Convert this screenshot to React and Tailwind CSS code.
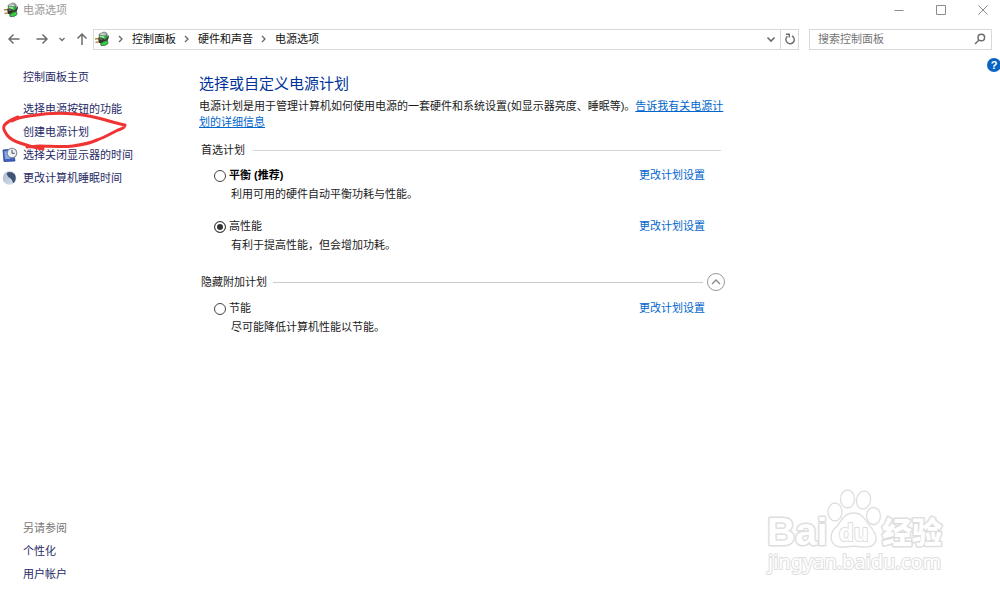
import React, { useState } from "react";

function PowerIcon() {
  return (
    <svg className="size-4 shrink-0" viewBox="0 0 16 16" aria-hidden="true">
      <path d="M8 3 Q8 1 10 1 Q13 1 13.5 4" fill="none" stroke="#8a9a94" strokeWidth="1" />
      <path d="M5 3.5 L12.5 3 L14 12.5 Q11 15.8 7 14.5 Z" fill="#2fae3f" stroke="#3c5a45" strokeWidth="0.7" />
      <path d="M5.8 4.8 L10 4.4 L10.5 7 L6.2 7 Z" fill="#8fe98c" />
      <path d="M8 12.5 L13 10.5 L13.2 12.6 Q11.5 14.4 8.2 14 Z" fill="#35d441" />
      <ellipse cx="9" cy="3.2" rx="3.6" ry="1.3" fill="#d5ddd8" stroke="#56665c" strokeWidth="0.6" />
      <path d="M10 9.500 Q14.500 9 14.200 4.500" fill="none" stroke="#333" strokeWidth="1.4" />
      <path d="M1 8 L4.5 7.500 M1.500 11.500 L5 10.800" stroke="#b18a2e" strokeWidth="1.3" />
      <path d="M4 6.8 L7.500 6.600 Q10.500 7.800 10 10 Q8.500 12.300 5 12 Z" fill="#35322e" />
      <path d="M5.5 8 L8.5 8.100" stroke="#8b8580" strokeWidth="1" />
    </svg>
  );
}

function DisplayClockIcon() {
  return (
    <svg className="size-4 shrink-0" viewBox="0 0 16 16" aria-hidden="true">
      <path d="M1 3 L11 2 L13 14 L2 14.5 Z" fill="#3e62c4" stroke="#273f91" strokeWidth="0.8" />
      <path d="M2.3 4.3 L8 4 L8 12 L3 12 Z" fill="#8ba6e8" />
      <circle cx="10" cy="6" r="4.800" fill="#eef1f4" stroke="#7d8794" strokeWidth="1.1" />
      <path d="M10 2.800 V6.300 H12.700" fill="none" stroke="#414b59" strokeWidth="1" />
    </svg>
  );
}

function MoonIcon() {
  return (
    <svg className="size-4 shrink-0" viewBox="0 0 16 16" aria-hidden="true">
      <defs>
        <linearGradient id="moon" x1="0" y1="0" x2="1" y2="1">
          <stop offset="0" stopColor="#aab9cb" />
          <stop offset="1" stopColor="#d5e1ee" />
        </linearGradient>
      </defs>
      <circle cx="7.5" cy="8" r="6.8" fill="url(#moon)" />
      <path d="M4.8 3 Q9 .8 12.5 4 Q15 8 12.5 12 Q11.8 13 11 13 Q10.5 9.5 8 8 Q5 6.5 4.8 3 Z" fill="#3f5375" />
    </svg>
  );
}

function Chevron({ className, d = "M3 1 L6 4 L3 7" }) {
  return (
    <svg className={className} viewBox="0 0 8 8" fill="none" stroke="currentColor" strokeWidth="1.3" aria-hidden="true">
      <path d={d} />
    </svg>
  );
}

function TitleBar() {
  return (
    <header className="flex h-5 items-center pl-[3px]">
      <PowerIcon />
      <h1 className="ml-1 flex-1 text-[#999]">电源选项</h1>
      <div className="-mr-1 flex items-center text-[#8c8c8c]">
        <button aria-label="最小化" className="flex h-5 w-[42px] items-center justify-center">
          <svg className="size-3" viewBox="0 0 12 12" stroke="currentColor"><path d="M1.500 6.500 H10.500" /></svg>
        </button>
        <button aria-label="最大化" className="flex h-5 w-[42px] items-center justify-center">
          <svg className="size-3" viewBox="0 0 12 12" stroke="currentColor" fill="none"><path d="M1.500 1.500 H10.500 V10.500 H1.500 Z" /></svg>
        </button>
        <button aria-label="关闭" className="flex h-5 w-[42px] items-center justify-center">
          <svg className="size-3" viewBox="0 0 12 12" stroke="currentColor"><path d="M1.500 1.500 L10.500 10.500 M10.500 1.500 L1.500 10.500" /></svg>
        </button>
      </div>
    </header>
  );
}

function Arrow({ d }) {
  return (
    <svg className="size-3" viewBox="0 0 12 12" fill="none" stroke="currentColor" strokeWidth="1.5" aria-hidden="true">
      <path d={d} />
    </svg>
  );
}

function AddressBar() {
  return (
    <nav className="mt-[7px] flex h-6 items-center pr-2 pl-2 text-[#6c6c6c]">
      <button aria-label="后退" className="flex h-5 w-3 items-center"><Arrow d="M11.500 6 H1 M5.500 1.500 L1 6 L5.500 10.500" /></button>
      <button aria-label="前进" className="ml-4 flex h-5 w-3 items-center"><Arrow d="M.5 6 H11 M6.500 1.500 L11 6 L6.500 10.500" /></button>
      <button aria-label="最近的位置" className="ml-[10px] flex h-5 w-2 items-center"><Chevron className="size-2" d="M1.500 3 L4 5.500 L6.500 3" /></button>
      <button aria-label="上移" className="ml-[10px] flex h-5 w-3 items-center"><Arrow d="M6 12 V1 M1.500 5.500 L6 1 L10.500 5.500" /></button>
      <div className="ml-[5px] flex h-[21px] flex-1 items-center border border-[#d9d9d9]">
        <PowerIcon />
        <ol className="flex flex-1 items-center text-[#111]">
          {["控制面板", "硬件和声音", "电源选项"].map((name) => (
            <li key={name} className="flex items-center">
              <Chevron className="mr-2 ml-[6px] size-2 text-[#666]" />
              <a href="#" className="whitespace-nowrap">{name}</a>
            </li>
          ))}
        </ol>
        <button aria-label="历史记录" className="flex h-5 w-[18px] items-center justify-center">
          <svg className="size-[10px]" viewBox="0 0 10 10" fill="none" stroke="currentColor" strokeWidth="1.6"><path d="M1.500 3.500 L5 7 L8.500 3.500" /></svg>
        </button>
        <button aria-label="刷新" className="flex h-[19px] w-[18px] items-center justify-center border-l border-[#d9d9d9]">
          <svg className="size-3" viewBox="0 0 12 12" fill="none" stroke="currentColor" strokeWidth="1.4">
            <path d="M8 2.800 A4.200 4.200 0 1 1 3.500 3.200" />
            <path d="M2 1.200 H5.300 V4.600" />
          </svg>
        </button>
      </div>
      <label className="ml-[10px] flex h-[21px] w-[183px] items-center border border-[#d9d9d9] pr-[5px] pl-2">
        <input aria-label="搜索控制面板" placeholder="搜索控制面板" className="min-w-0 flex-1 bg-transparent outline-none placeholder:text-[#757575]" />
        <svg className="size-3" viewBox="0 0 12 12" fill="none" stroke="currentColor" strokeWidth="1.5" aria-hidden="true">
          <circle cx="7.300" cy="4.500" r="3.300" />
          <path d="M5 7 L1 11" />
        </svg>
      </label>
    </nav>
  );
}

function SideLink({ icon, children }) {
  return (
    <li className="flex h-[23px] items-center">
      <span className="flex w-[21px] shrink-0">{icon}</span>
      <a href="#" className="whitespace-nowrap text-[#1f2a66]">{children}</a>
    </li>
  );
}

function Sidebar() {
  return (
    <aside className="relative flex w-[199px] shrink-0 flex-col pb-3 pl-[2px]">
      <ul className="pt-[14px]">
        <SideLink>控制面板主页</SideLink>
      </ul>
      <ul className="mt-[9px]">
        <SideLink>选择电源按钮的功能</SideLink>
        <SideLink>创建电源计划</SideLink>
        <SideLink icon={<DisplayClockIcon />}>选择关闭显示器的时间</SideLink>
        <SideLink icon={<MoonIcon />}>更改计算机睡眠时间</SideLink>
      </ul>
      <svg className="pointer-events-none absolute top-[61px] left-0 h-[40px] w-[130px] overflow-visible" viewBox="0 0 130 40" aria-hidden="true">
        <path
          d="M18 5 C13 7 8 9 4.500 13 C2 16 5 20 7 23 C10 27 14 29 20 31 C28 34 36 36 43 37 M12 9 C18 5 25 4.500 33 3.500 C45 1.500 56 1 67 1.500 C80 2 90 4 100 6.500 C110 9 118 12 125 13 C125 16 121 17 118 18 C110 22 105 25 97 28 C90 31 81 33 73 34 C62 35.500 50 34 40 34 C34 34 30 35 27 35"
          fill="none" stroke="#f03434" strokeWidth="3" strokeLinecap="round" strokeLinejoin="round"
        />
      </svg>
      <h2 className="mt-auto flex h-[23px] items-center pl-[21px] text-[#777]">另请参阅</h2>
      <ul>
        <SideLink>个性化</SideLink>
        <SideLink>用户帐户</SideLink>
      </ul>
    </aside>
  );
}

function Plan({ id, name, note, bold, selected, onSelect }) {
  return (
    <div className="flex items-start pl-[13px]">
      <input
        type="radio" id={id} name="plan" checked={selected} onChange={() => onSelect(id)}
        className="mt-[3px] size-3 shrink-0 appearance-none rounded-full border border-[#444] bg-white checked:bg-[#333] checked:shadow-[inset_0_0_0_2px_white]"
      />
      <div className="ml-[3px] flex-1">
        <label htmlFor={id} className={bold ? "block font-bold text-black" : "block"}>{name}</label>
        <p className="mt-[3px] pl-[2px]">{note}</p>
      </div>
      <a href="#" className="mr-4 text-[#0066cc]">更改计划设置</a>
    </div>
  );
}

function Watermark() {
  return (
    <svg className="pointer-events-none absolute right-[48px] bottom-[16px] h-[100px] w-[192px]" viewBox="0 0 192 100" role="img" aria-label="Baidu 经验">
      <g fill="#fff" stroke="#dedede" strokeWidth="1.3" strokeLinejoin="round">
        <g fontFamily="'Liberation Sans', sans-serif" fontWeight="700" paintOrder="stroke" strokeWidth="3">
          <text x="7" y="64" fontSize="39">Bai</text>
        </g>
        <ellipse cx="75" cy="31" rx="7" ry="9" />
        <ellipse cx="87.500" cy="18" rx="7" ry="9" />
        <ellipse cx="103.500" cy="19" rx="7" ry="9" transform="rotate(12 103.500 19)" />
        <ellipse cx="113.500" cy="35" rx="7" ry="8.500" />
        <path d="M94 32 C85 32 82 38 78 44 C73 49 71 51 71 57 C72 65 79 67 85 66 Q94 64.500 103 66 C110 67 117 64 116 56 C115 49 110 46 107 41 C103 35 100 32 94 32 Z" />
        <g fontFamily="'Liberation Sans', sans-serif" fontWeight="700" paintOrder="stroke" strokeWidth="2">
          <text x="79" y="60" fontSize="24">du</text>
        </g>
        <g fontFamily="'Noto Sans CJK SC', sans-serif" fontWeight="900" paintOrder="stroke" strokeWidth="3">
          <text x="122" y="62" fontSize="30">经验</text>
        </g>
        <g fontFamily="'Noto Sans', sans-serif" paintOrder="stroke" strokeWidth="2">
          <text x="8" y="88" fontSize="20">jingyan.baidu.com</text>
        </g>
      </g>
    </svg>
  );
}

export default function App() {
  const [plan, setPlan] = useState("high");
  return (
    <div className="relative flex min-h-screen flex-col overflow-hidden bg-white font-['Liberation_Sans','Noto_Sans_CJK_SC',sans-serif] text-[11px] leading-4 text-[#1a1a1a]">
      <TitleBar />
      <AddressBar />
      <div className="flex flex-1">
        <Sidebar />
        <main className="flex-1 pt-[23px]">
          <div className="max-w-[530px]">
            <h2 className="text-[15px] leading-5 text-[#003399]">选择或自定义电源计划</h2>
            <p className="mt-1">
              电源计划是用于管理计算机如何使用电源的一套硬件和系统设置(如显示器亮度、睡眠等)。<a href="#" className="text-[#0066cc] underline">告诉我有关电源计划的详细信息</a>
            </p>
          </div>
          <div className="max-w-[522px] pl-[2px]">
            <section>
              <h3 className="mt-3 flex items-center gap-2 after:h-px after:flex-1 after:bg-[#d5d5d5]">首选计划</h3>
              <div className="mt-[9px] space-y-4">
                <Plan id="balanced" name="平衡 (推荐)" note="利用可用的硬件自动平衡功耗与性能。" bold selected={plan === "balanced"} onSelect={setPlan} />
                <Plan id="high" name="高性能" note="有利于提高性能，但会增加功耗。" selected={plan === "high"} onSelect={setPlan} />
              </div>
            </section>
            <section>
              <div className="mt-5 -mr-1 flex items-center">
                <h3>隐藏附加计划</h3>
                <span className="mr-1 ml-[6px] h-px flex-1 bg-[#ccc]" />
                <button aria-label="隐藏附加计划" className="flex size-[18px] items-center justify-center rounded-full border border-[#999] text-[#888]">
                  <svg className="size-[10px]" viewBox="0 0 10 10" fill="none" stroke="currentColor" strokeWidth="1.4"><path d="M1 7 L5 3 L9 7" /></svg>
                </button>
              </div>
              <div className="mt-[9px]">
                <Plan id="saver" name="节能" note="尽可能降低计算机性能以节能。" selected={plan === "saver"} onSelect={setPlan} />
              </div>
            </section>
          </div>
        </main>
        <button aria-label="帮助" className="mt-[7px] -mr-px flex size-[14px] shrink-0 items-center justify-center rounded-full bg-[#0a63c2] text-[11px] leading-none font-bold text-white">?</button>
      </div>
      <Watermark />
    </div>
  );
}
